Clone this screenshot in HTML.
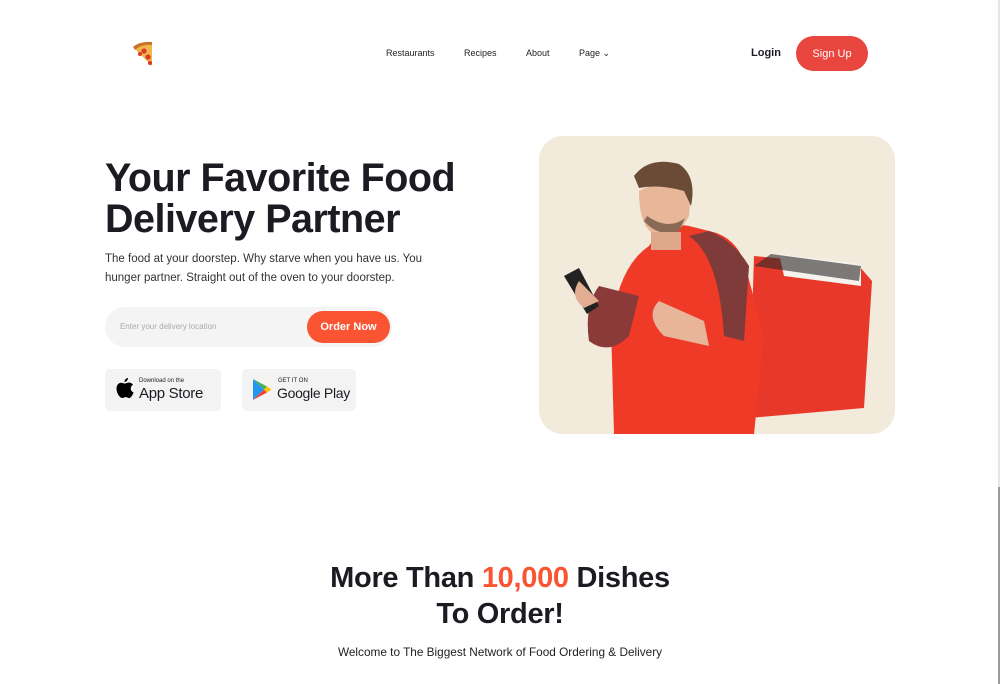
<!DOCTYPE html>
<html><head><meta charset="utf-8"><style>
*{margin:0;padding:0;box-sizing:border-box}
body{width:1000px;height:684px;overflow:hidden;background:#fff;font-family:"Liberation Sans",sans-serif;color:#1b1b22;position:relative}
.a{position:absolute}
.nav{font-size:9px;color:#222;top:48px}
</style></head><body>
<div class="a" style="right:0;top:0;width:2px;height:487px;background:#e6e6e6"></div>
<div class="a" style="right:0;top:487px;width:2px;height:197px;background:#9a9a9a"></div>
<svg class="a" style="left:132px;top:41px" width="22" height="26" viewBox="0 0 22 26">
<path d="M1 6 Q8 0 20 1 L20 25 Z" fill="#f0b64a"/><path d="M1 6 Q8 0 20 1 L20 4 Q9 3 3 9Z" fill="#c7762c"/>
<circle cx="12" cy="10" r="2.6" fill="#d93a2b"/><circle cx="8" cy="13" r="2" fill="#d93a2b"/><circle cx="16" cy="16" r="2.6" fill="#d93a2b"/><circle cx="18" cy="22" r="2" fill="#d93a2b"/></svg>
<div class="a nav" style="left:386px">Restaurants</div>
<div class="a nav" style="left:464px">Recipes</div>
<div class="a nav" style="left:526px">About</div>
<div class="a nav" style="left:579px">Page ⌄</div>
<div class="a" style="left:751px;top:47px;font-size:11px;font-weight:bold">Login</div>
<div class="a" style="left:796px;top:36px;width:72px;height:35px;border-radius:18px;background:#e8463e;color:#fff;font-size:11px;display:flex;align-items:center;justify-content:center">Sign Up</div>
<div class="a" style="left:105px;top:158px;font-size:39.5px;font-weight:bold;line-height:41px;letter-spacing:-0.5px">Your Favorite Food<br>Delivery Partner</div>
<div class="a" style="left:105px;top:250px;font-size:11.5px;line-height:19px;color:#333;width:340px">The food at your doorstep. Why starve when you have us. You hunger partner. Straight out of the oven to your doorstep.</div>
<div class="a" style="left:105px;top:307px;width:287px;height:40px;border-radius:20px;background:#f4f4f4"></div>
<div class="a" style="left:120px;top:322px;font-size:8px;color:#aaa">Enter your delivery location</div>
<div class="a" style="left:307px;top:311px;width:83px;height:32px;border-radius:16px;background:#fa5432;color:#fff;font-size:11px;font-weight:bold;text-align:center;line-height:32px">Order Now</div>
<div class="a" style="left:105px;top:369px;width:116px;height:42px;border-radius:5px;background:#f3f3f3"></div>
<svg class="a" style="left:115px;top:377px" width="20" height="24" viewBox="0 0 20 24"><path d="M13 1c0 2-1.5 4-3.5 4 0-2 1.5-4 3.5-4zM10 6.5c1.2 0 2.5-1 4-1 2 0 3.3 1.2 4 2.3-3.3 1.8-2.8 6.5.6 7.6-.8 2.3-2.5 5.6-4.3 5.6-1.5 0-1.9-.9-3.6-.9s-2.2.9-3.6.9C4.8 21 1.5 16 1.5 11.5c0-3.6 2.3-5.7 4.6-5.7 1.6 0 2.8 1 3.9.7z" fill="#000"/></svg>
<div class="a" style="left:139px;top:378px;font-size:6px">Download on the</div>
<div class="a" style="left:139px;top:385px;font-size:15px;letter-spacing:-0.3px">App Store</div>
<div class="a" style="left:242px;top:369px;width:114px;height:42px;border-radius:5px;background:#f3f3f3"></div>
<svg class="a" style="left:252px;top:378px" width="20" height="23" viewBox="0 0 20 23"><path d="M1 1 12 11.5 1 22z" fill="#2196f3"/><path d="M1 1 15 8.5 12 11.5z" fill="#4caf50"/><path d="M1 22 15 14.5 12 11.5z" fill="#f44336"/><path d="M15 8.5 19.5 11.5 15 14.5 12 11.5z" fill="#ffc107"/></svg>
<div class="a" style="left:278px;top:378px;font-size:6px">GET IT ON</div>
<div class="a" style="left:277px;top:385px;font-size:14px;letter-spacing:-0.3px">Google Play</div>
<div class="a" style="left:539px;top:136px;width:356px;height:298px;border-radius:24px;background:#f2eadb;overflow:hidden">
<svg width="356" height="298" viewBox="0 0 356 298">
<path d="M215 120 L320 130 L333 145 L325 272 L210 282 Z" fill="#e8382a"/>
<path d="M240 118 L322 128 L322 150 L245 140 Z" fill="#f6f2ee"/>
<path d="M215 130 L232 118 L322 130 L320 145 Z" fill="#2a2a2a" opacity=".6"/>
<path d="M110 110 Q125 85 150 90 L170 95 Q195 100 205 125 L225 200 L215 298 L75 298 L72 190 Q80 130 110 110Z" fill="#ef3a27"/>
<path d="M60 150 Q45 170 50 205 Q70 220 90 200 L100 160Z" fill="#8b3a3a"/>
<path d="M150 100 Q180 120 185 200 L205 205 L210 130 Q195 105 170 95Z" fill="#7e3b3a"/>
<path d="M120 165 Q105 180 125 200 L170 210 L165 185Z" fill="#e8b59a"/>
<path d="M25 140 L40 132 L60 170 L48 178Z" fill="#222"/>
<path d="M40 145 Q30 160 45 172 L60 165Z" fill="#e2ad91"/>
<path d="M100 55 Q100 95 120 100 Q140 100 150 80 L152 55 Q140 35 100 55Z" fill="#e8b698"/>
<path d="M95 40 Q110 20 140 28 Q158 40 152 70 L145 55 Q120 48 100 52Z" fill="#6b4a36"/>
<path d="M105 85 Q120 102 140 95 L146 82 Q130 95 108 80Z" fill="#8a6a55"/>
<rect x="112" y="96" width="30" height="18" fill="#e0a88a"/>
</svg></div>
<div class="a" style="left:0;top:560px;width:1000px;text-align:center;font-size:29px;font-weight:bold;line-height:36px;letter-spacing:-0.3px">More Than <span style="color:#fa5432">10,000</span> Dishes<br>To Order!</div>
<div class="a" style="left:0;top:645px;width:1000px;text-align:center;font-size:11.8px;color:#222">Welcome to The Biggest Network of Food Ordering &amp; Delivery</div>
</body></html>
